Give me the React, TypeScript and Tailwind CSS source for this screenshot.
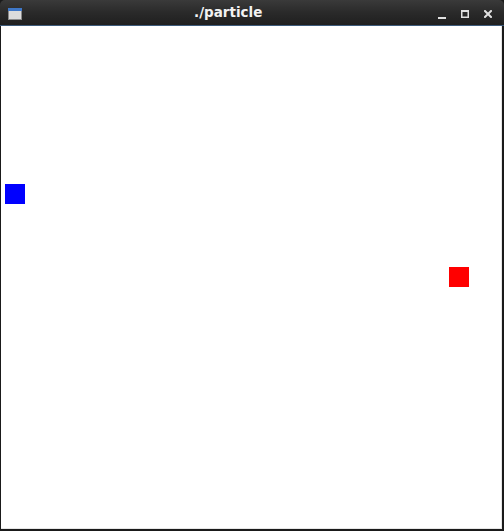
export default function App() {
    return (
        <div className="w-[504px] h-[531px] bg-[#1a1a1a] flex flex-col overflow-hidden">
            {/* Title bar */}
            <header
                className="relative h-[26px] shrink-0 rounded-t-[5px] bg-gradient-to-b from-[#3a3a3a] via-[#2a2a2a] to-[#1f1f1f] border-b border-[#3c5a7a] flex items-center"
                style={{ fontFamily: '"DejaVu Sans", sans-serif' }}
            >
                <svg className="absolute left-[8px] top-[8px]" width="14" height="12" viewBox="0 0 14 12">
                    <rect x="0.5" y="0.5" width="13" height="11" fill="#dcdcdc" stroke="#8a8a8a" />
                    <rect x="0" y="0" width="14" height="3" fill="#3f78c8" />
                </svg>
                <span className="absolute left-[194px] top-[4px] text-[13.5px] leading-[17px] font-bold text-[#f2f2f2]">
                    ./particle
                </span>
                <svg className="absolute left-[438px] top-[10px]" width="8" height="9" viewBox="0 0 8 9">
                    <rect x="0" y="7" width="8" height="2" fill="#e0e0e0" />
                </svg>
                <svg className="absolute left-[461px] top-[10px]" width="8" height="8" viewBox="0 0 8 8">
                    <rect x="0.75" y="0.75" width="6.5" height="6.5" fill="none" stroke="#e0e0e0" strokeWidth="1.5" />
                    <rect x="0" y="0" width="8" height="2" fill="#e0e0e0" />
                </svg>
                <svg className="absolute left-[484px] top-[10px]" width="8" height="8" viewBox="0 0 8 8">
                    <path d="M1 1 L7 7 M7 1 L1 7" stroke="#e0e0e0" strokeWidth="2" strokeLinecap="square" />
                </svg>
            </header>

            {/* Canvas */}
            <main className="relative flex-1 mx-px mb-[2px] mr-[2px] bg-white border-b border-r border-[#e6e6e6]">
                <div className="absolute left-[4px] top-[158px] w-[20px] h-[20px] bg-[#0000ff]" />
                <div className="absolute left-[448px] top-[241px] w-[20px] h-[20px] bg-[#ff0000]" />
            </main>
        </div>
    );
}
